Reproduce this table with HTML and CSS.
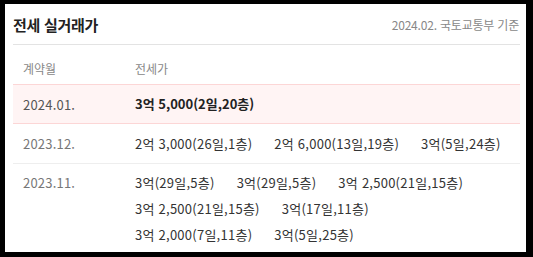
FILE: index.html
```html
<!DOCTYPE html>
<html lang="ko">
<head>
<meta charset="utf-8">
<link rel="stylesheet" href="styles.css">
</head>
<body>
<div class="frame">
  <div class="head">
    <h2 class="title">전세 실거래가</h2>
    <span class="source">2024.02. 국토교통부 기준</span>
  </div>
  <div class="thead">
    <span class="col-date">계약월</span>
    <span class="col-val">전세가</span>
  </div>
  <div class="row row-hl">
    <span class="col-date">2024.01.</span>
    <div class="col-val">
      <div class="line"><span class="deal strong">3억 5,000(2일,20층)</span></div>
    </div>
  </div>
  <div class="row">
    <span class="col-date">2023.12.</span>
    <div class="col-val">
      <div class="line">
        <span class="deal">2억 3,000(26일,1층)</span>
        <span class="deal">2억 6,000(13일,19층)</span>
        <span class="deal">3억(5일,24층)</span>
      </div>
    </div>
  </div>
  <div class="row row-multi">
    <span class="col-date">2023.11.</span>
    <div class="col-val">
      <div class="line">
        <span class="deal">3억(29일,5층)</span>
        <span class="deal">3억(29일,5층)</span>
        <span class="deal">3억 2,500(21일,15층)</span>
      </div>
      <div class="line">
        <span class="deal">3억 2,500(21일,15층)</span>
        <span class="deal">3억(17일,11층)</span>
      </div>
      <div class="line">
        <span class="deal">3억 2,000(7일,11층)</span>
        <span class="deal">3억(5일,25층)</span>
      </div>
    </div>
  </div>
</div>
</body>
</html>
```

FILE: styles.css
```css
* { box-sizing: border-box; }
html, body { margin: 0; padding: 0; background: #000; }
body {
  font-family: "Noto Sans CJK KR", "Noto Sans", sans-serif;
  color: #333;
}
.frame {
  width: 533px;
  height: 257px;
  background: #fff;
  border-style: solid;
  border-color: #000;
  border-width: 4px 7px 5px 5px;
  padding: 0 6px 0 8px;
  overflow: hidden;
}
.head {
  height: 41px;
  display: flex;
  align-items: center;
  justify-content: space-between;
  border-bottom: 1px solid #e3e3e3;
}
.title {
  margin: 0;
  font-size: 15px;
  font-weight: 700;
  letter-spacing: -0.3px;
  color: #222;
}
.source {
  font-size: 12px;
  color: #888;
  letter-spacing: -0.2px;
  padding-right: 1px;
}
.thead {
  height: 39px;
  display: flex;
  align-items: center;
  padding-top: 8px;
  font-size: 12px;
  color: #888;
}
.col-date {
  width: 122px;
  flex: none;
  padding-left: 10px;
}
.col-val { flex: 1; }
.row {
  display: flex;
  align-items: center;
  height: 40px;
  border-bottom: 1px solid #eee;
  font-size: 13px;
}
.row .col-date { color: #777; letter-spacing: 0.2px; }
.row-hl {
  background: #fff4f4;
  border-top: 1px solid #fcd6d6;
  border-bottom: 1px solid #fcd6d6;
}
.row-hl .col-date { color: #555; }
.row-multi {
  height: auto;
  align-items: flex-start;
  border-bottom: none;
  padding-top: 6px;
}
.row-multi .col-date { line-height: 26px; }
.line {
  display: flex;
  column-gap: 22px;
  line-height: 26px;
}
.deal { color: #333; white-space: nowrap; letter-spacing: 0.25px; }
.strong { font-weight: 700; color: #222; letter-spacing: 0; }
```
